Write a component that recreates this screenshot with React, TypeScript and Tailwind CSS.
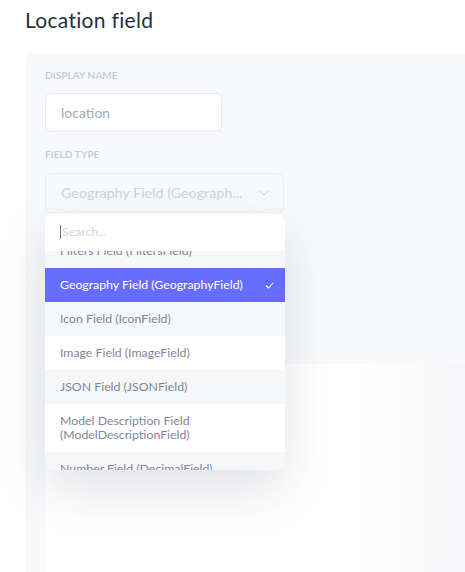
import React from "react";

const items = [
  { label: "Filters Field (FiltersField)", bg: "bg-[#f6f7f9]" },
  { label: "Geography Field (GeographyField)", selected: true },
  { label: "Icon Field (IconField)", bg: "bg-[#f6f7f9]" },
  { label: "Image Field (ImageField)", bg: "bg-white" },
  { label: "JSON Field (JSONField)", bg: "bg-[#f6f7f9]" },
  { label: "Model Description Field (ModelDescriptionField)", bg: "bg-white" },
  { label: "Number Field (DecimalField)", bg: "bg-[#f6f7f9]" },
];

export default function App() {
  return (
    <div className="w-[465px] h-[572px] overflow-hidden bg-white font-['Lato','Noto_Sans',sans-serif]">
      <h1 className="pl-[25px] pt-[6px] h-[53px] text-[21px] leading-[28px] tracking-[0.3px] text-[#243042]">
        Location field
      </h1>
      <div className="ml-[25px] w-[460px] h-[540px] bg-[#f8f9fb] rounded-tl-[8px] pl-[20px] pt-[16px]">
        <div className="text-[10px] leading-[12px] font-semibold tracking-[0.1px] text-[#c3c9d4] uppercase">
          Display name
        </div>
        <div className="mt-[12px] w-[177px] h-[39px] bg-white border border-[#e6e9ef] rounded-[6px] flex items-center pl-[15px] text-[14px] text-[#a3abba]">
          location
        </div>
        <div className="mt-[16px] text-[10px] leading-[12px] font-semibold tracking-[0.1px] text-[#c3c9d4] uppercase">
          Field type
        </div>
        <div className="relative mt-[13px] w-[239px]">
          <div className="h-[40px] bg-[#f8f9fb] border border-[#eceef2] rounded-[6px] flex items-center justify-between pl-[15px] pr-[14px] text-[14.3px] text-[#cdd2da]">
            <span>Geography Field (Geograph...</span>
            <svg width="10" height="6" viewBox="0 0 10 6" fill="none">
              <path d="M1 1l4 4 4-4" stroke="#c8ccd5" strokeWidth="1" />
            </svg>
          </div>
          <div className="absolute left-0 top-[40px] w-[240px] h-[257px] bg-white rounded-[10px] overflow-hidden shadow-[0_20px_50px_rgba(30,40,60,0.13)] z-10 flex flex-col">
            <div className="h-[38px] shrink-0 flex items-center pl-[15px] text-[12.3px] text-[#d2d6de] bg-white">
              <span className="w-px h-[14px] bg-[#6b7280] mr-px" />
              <span>Search...</span>
            </div>
            <div className="flex-1 overflow-hidden">
              <div className="-mt-[17px]">
                {items.map((it) => (
                  <div
                    key={it.label}
                    className={
                      it.selected
                        ? "bg-[#666dfd] text-white flex items-center justify-between pl-[15px] pr-[11px] py-[10px] text-[12.3px] leading-[14px]"
                        : `${it.bg} text-[#7d8699] pl-[15px] pr-[40px] py-[10px] text-[12.3px] leading-[14px]`
                    }
                  >
                    <span>{it.label}</span>
                    {it.selected && (
                      <svg width="9" height="7" viewBox="0 0 9 7" fill="none">
                        <path d="M1 3.5l2.5 2.5L8 1" stroke="white" strokeWidth="1.1" />
                      </svg>
                    )}
                  </div>
                ))}
              </div>
            </div>
          </div>
        </div>
        <div className="mt-[151px] w-[440px] h-[220px] bg-white bg-[linear-gradient(90deg,#ffffff_0%,#ffffff_70%,#f4f5f7_100%)]" />
      </div>
    </div>
  );
}
